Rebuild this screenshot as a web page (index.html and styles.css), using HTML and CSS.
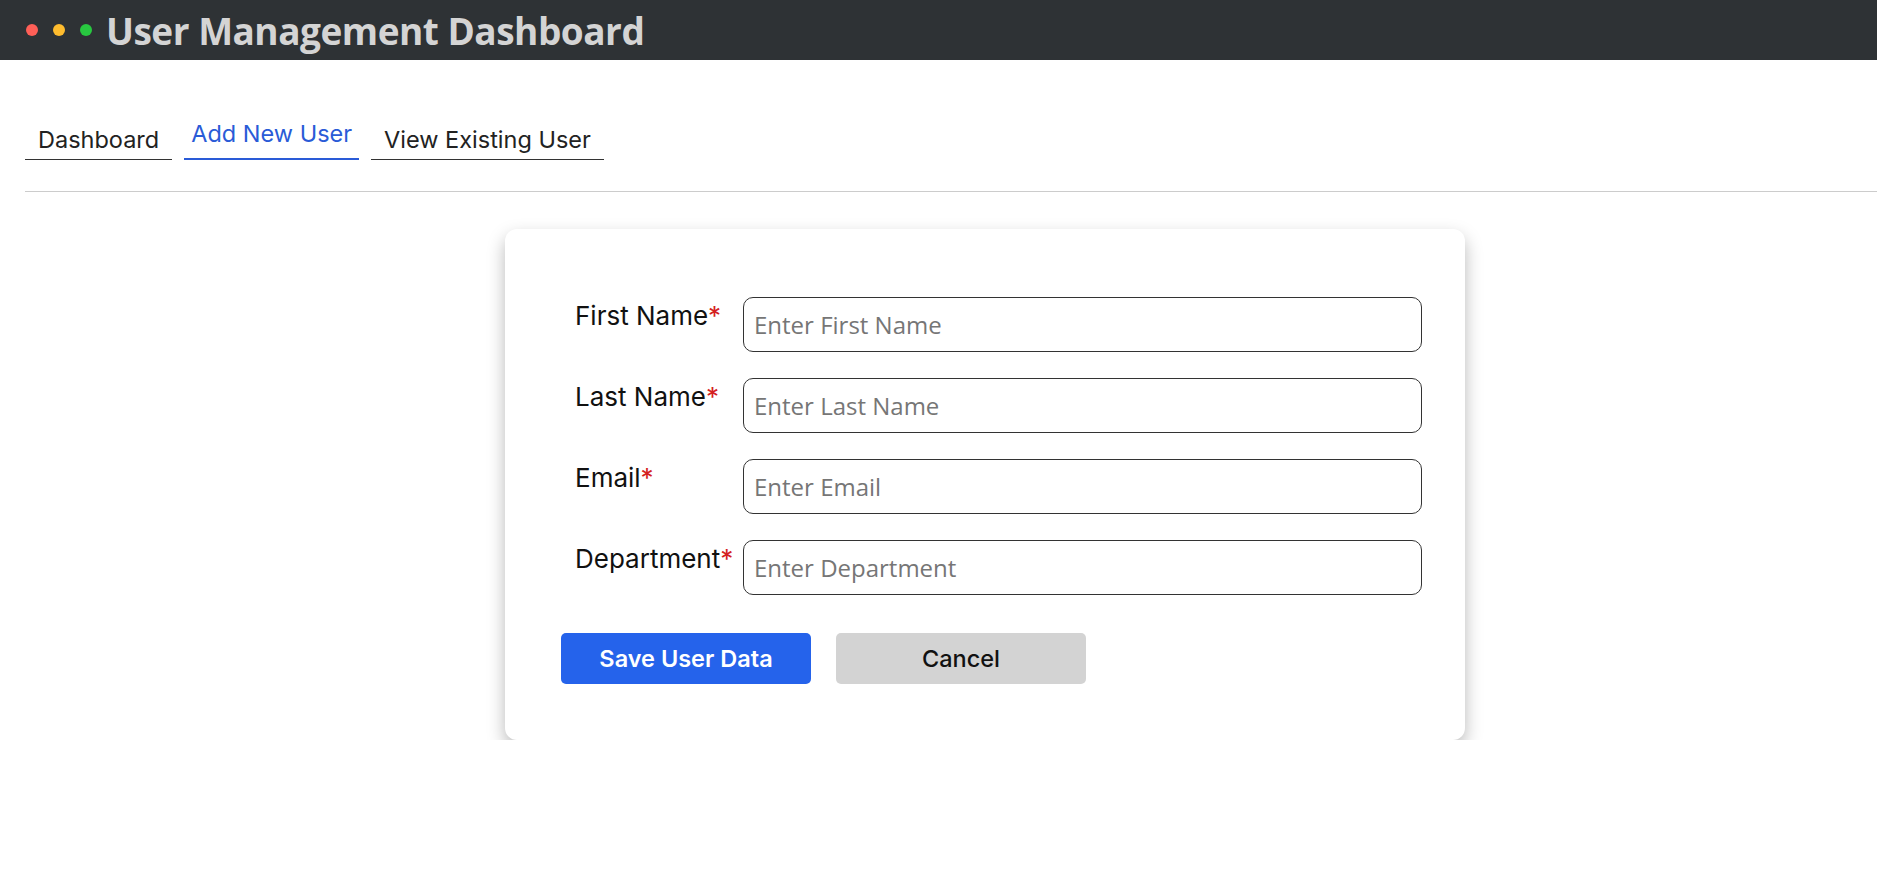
FILE: index.html
```html
<!DOCTYPE html>
<html>
<head>
<meta charset="utf-8">
<link rel="stylesheet" href="styles.css">
</head>
<body>
<header class="topbar">
  <div class="dots"><span class="dot red"></span><span class="dot yellow"></span><span class="dot green"></span></div>
  <h1 class="title">User Management Dashboard</h1>
</header>
<nav class="tabs">
  <a class="tab">Dashboard</a>
  <a class="tab active">Add New User</a>
  <a class="tab">View Existing User</a>
</nav>
<div class="divider"></div>
<main class="content">
  <form class="card">
    <div class="row"><label class="label">First Name<span class="req">*</span></label><input class="field" placeholder="Enter First Name"></div>
    <div class="row"><label class="label">Last Name<span class="req">*</span></label><input class="field" placeholder="Enter Last Name"></div>
    <div class="row"><label class="label">Email<span class="req">*</span></label><input class="field" placeholder="Enter Email"></div>
    <div class="row"><label class="label">Department<span class="req">*</span></label><input class="field" placeholder="Enter Department"></div>
    <div class="actions">
      <button type="button" class="btn primary">Save User Data</button>
      <button type="button" class="btn secondary">Cancel</button>
    </div>
  </form>
</main>
</body>
</html>
```
FILE: styles.css
```css
* { box-sizing: border-box; }
body { margin: 0; font-family: "Inter", "Liberation Sans", sans-serif; background: #fff; color: #111; }

.topbar { height: 60px; background: #2e3235; display: flex; align-items: center; padding-left: 26px; }
.dots { display: flex; gap: 15px; margin-right: 14px; }
.dot { width: 12px; height: 12px; border-radius: 50%; display: block; }
.red { background: #ff5f57; }
.yellow { background: #febc2e; }
.green { background: #28c840; }
.title { margin: 0; font-family: "Open Sans", sans-serif; font-weight: 700; font-size: 37px; color: #d4d4d4; letter-spacing: -0.5px; }

.tabs { display: flex; gap: 12px; padding: 0 25px; margin-top: 58px; align-items: flex-end; }
.tab { font-family: "Inter", sans-serif; font-size: 23.5px; color: #222; padding: 0 13px 3px; border-bottom: 1px solid #333; line-height: 32px; }
.tab.active { color: #2a5bd7; border-bottom: 2px solid #2a5bd7; padding: 0 7px 8px; }

.divider { height: 1px; background: #cccccc; margin: 31px 0 0 25px; }

.content { display: flex; justify-content: center; padding-top: 37px; }
.card { width: 960px; height: 511px; margin-left: 93px; background: #fff; border-radius: 12px; box-shadow: 0 8px 18px rgba(0,0,0,0.28); padding: 68px 0 0 70px; display: flex; flex-direction: column; gap: 26px; }
.row { display: flex; align-items: flex-start; }
.label { width: 168px; font-family: "Inter", sans-serif; font-size: 26px; line-height: 32px; color: #111; padding-top: 3px; white-space: nowrap; }
.req { color: #d42020; }
.field { width: 679px; height: 55px; border: 1px solid #333; border-radius: 10px; padding: 0 10px; font-family: "Open Sans", sans-serif; font-size: 24px; color: #111; outline: none; }
.field::placeholder { color: #767676; }

.actions { display: flex; gap: 25px; margin-left: -14px; margin-top: 12px; }
.btn { width: 250px; height: 51px; border: none; border-radius: 5px; font-family: "Inter", sans-serif; font-size: 23.5px; font-weight: 600; }
.primary { background: #2563eb; color: #fff; }
.secondary { background: #d3d3d3; color: #111; font-weight: 500; }
```
